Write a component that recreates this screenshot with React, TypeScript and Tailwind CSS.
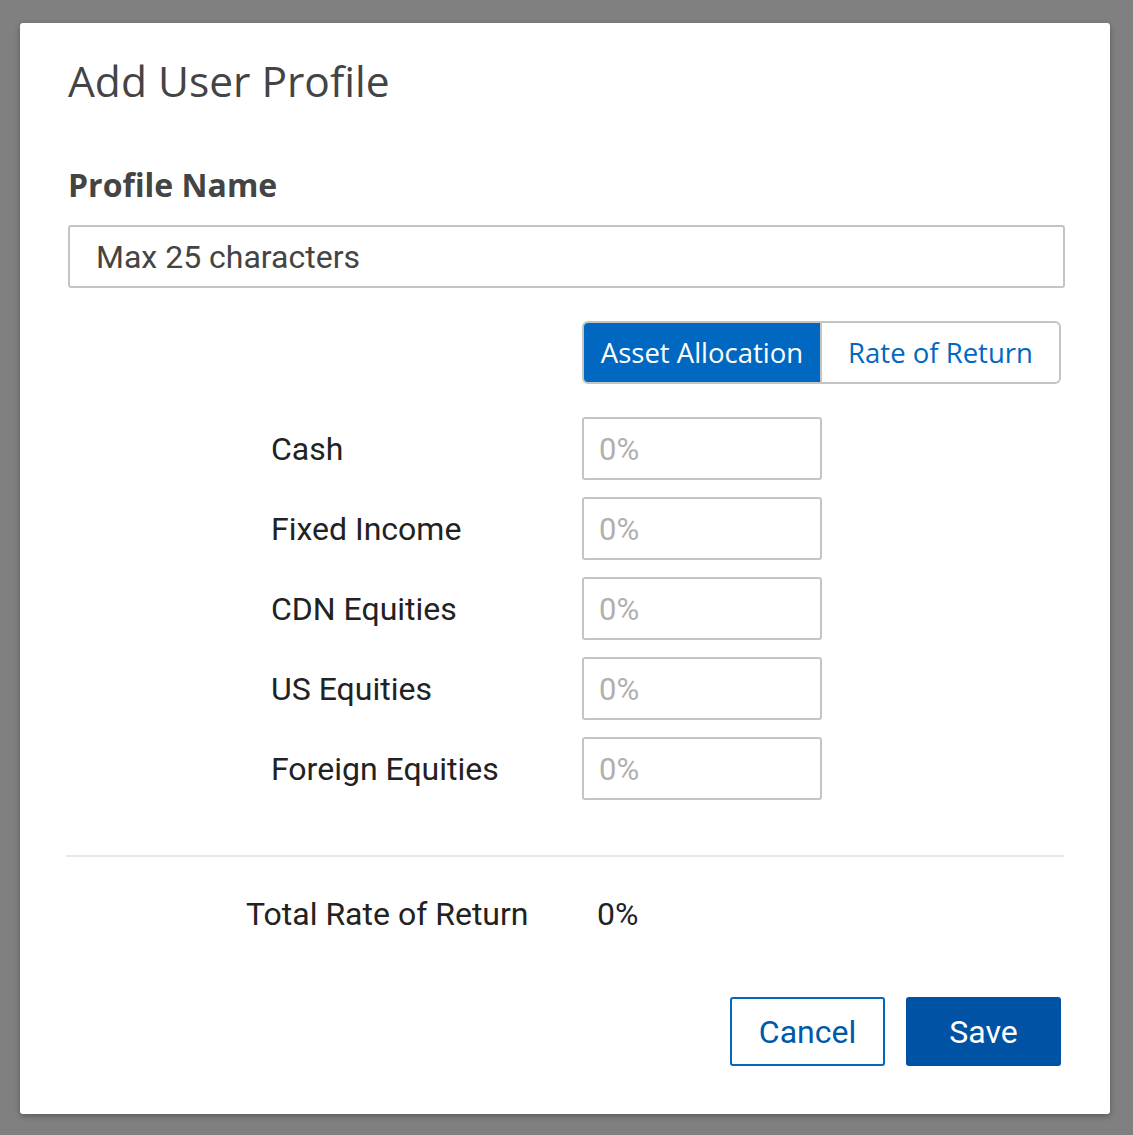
import React from "react";

const fira = { fontFamily: '"Open Sans", "Noto Sans", sans-serif' };

export default function App() {
  const rows = ["Cash", "Fixed Income", "CDN Equities", "US Equities", "Foreign Equities"];
  return (
    <div className="min-h-[1135px] w-[1133px] bg-[#808080] pt-[23px] pl-[20px]" style={{ fontFamily: 'Roboto, sans-serif' }}>
      <div className="w-[1090px] h-[1091px] bg-white rounded-[3px] shadow-[0_2px_6px_rgba(0,0,0,0.3)] px-[48px] pt-[30px]">
        <h1 className="text-[42.5px] leading-[56px] text-[#444]" style={fira}>Add User Profile</h1>
        <div className="mt-[54px] text-[32px] leading-[44px] font-bold text-[#444]" style={fira}>Profile Name</div>
        <div className="mt-[18px] h-[63px] w-[997px] border-2 border-[#c4c4c4] rounded-[3px] flex items-center pl-[26px] text-[32px] text-[#444]">
          Max 25 characters
        </div>
        <div className="mt-[33px] flex justify-end pr-[1px]">
          <div className="flex h-[63px] border-2 border-[#c4c4c4] rounded-[6px] overflow-hidden" style={fira}>
            <div className="w-[238px] bg-[#0068c0] text-white text-[27.5px] flex items-center justify-center border-r-2 border-[#c4c4c4]">Asset Allocation</div>
            <div className="w-[237px] text-[#0068c0] text-[27.5px] flex items-center justify-center">Rate of Return</div>
          </div>
        </div>
        <div className="mt-[33px] flex flex-col gap-[17px]">
          {rows.map((r) => (
            <div key={r} className="flex items-center">
              <div className="w-[514px] pl-[203px] text-[32px] text-[#222]">{r}</div>
              <div className="w-[240px] h-[63px] border-2 border-[#c4c4c4] rounded-[3px] flex items-center pl-[15px] pt-[4px] text-[31px] text-[#b0b0b0]">0%</div>
            </div>
          ))}
        </div>
        <div className="mt-[55px] -mx-[2px] h-[2px] bg-[#e8e8e8]" />
        <div className="mt-[33px] flex items-center text-[32px] text-[#222]">
          <div className="w-[529px] pl-[178px]">Total Rate of Return</div>
          <div>0%</div>
        </div>
        <div className="mt-[59px] flex justify-end gap-[21px] pr-[1px]">
          <button className="w-[155px] h-[69px] border-2 border-[#0068c0] rounded-[3px] text-[#0058a8] text-[32px]">Cancel</button>
          <button className="w-[155px] h-[69px] bg-[#0052a5] rounded-[3px] text-white text-[32px]">Save</button>
        </div>
      </div>
    </div>
  );
}
